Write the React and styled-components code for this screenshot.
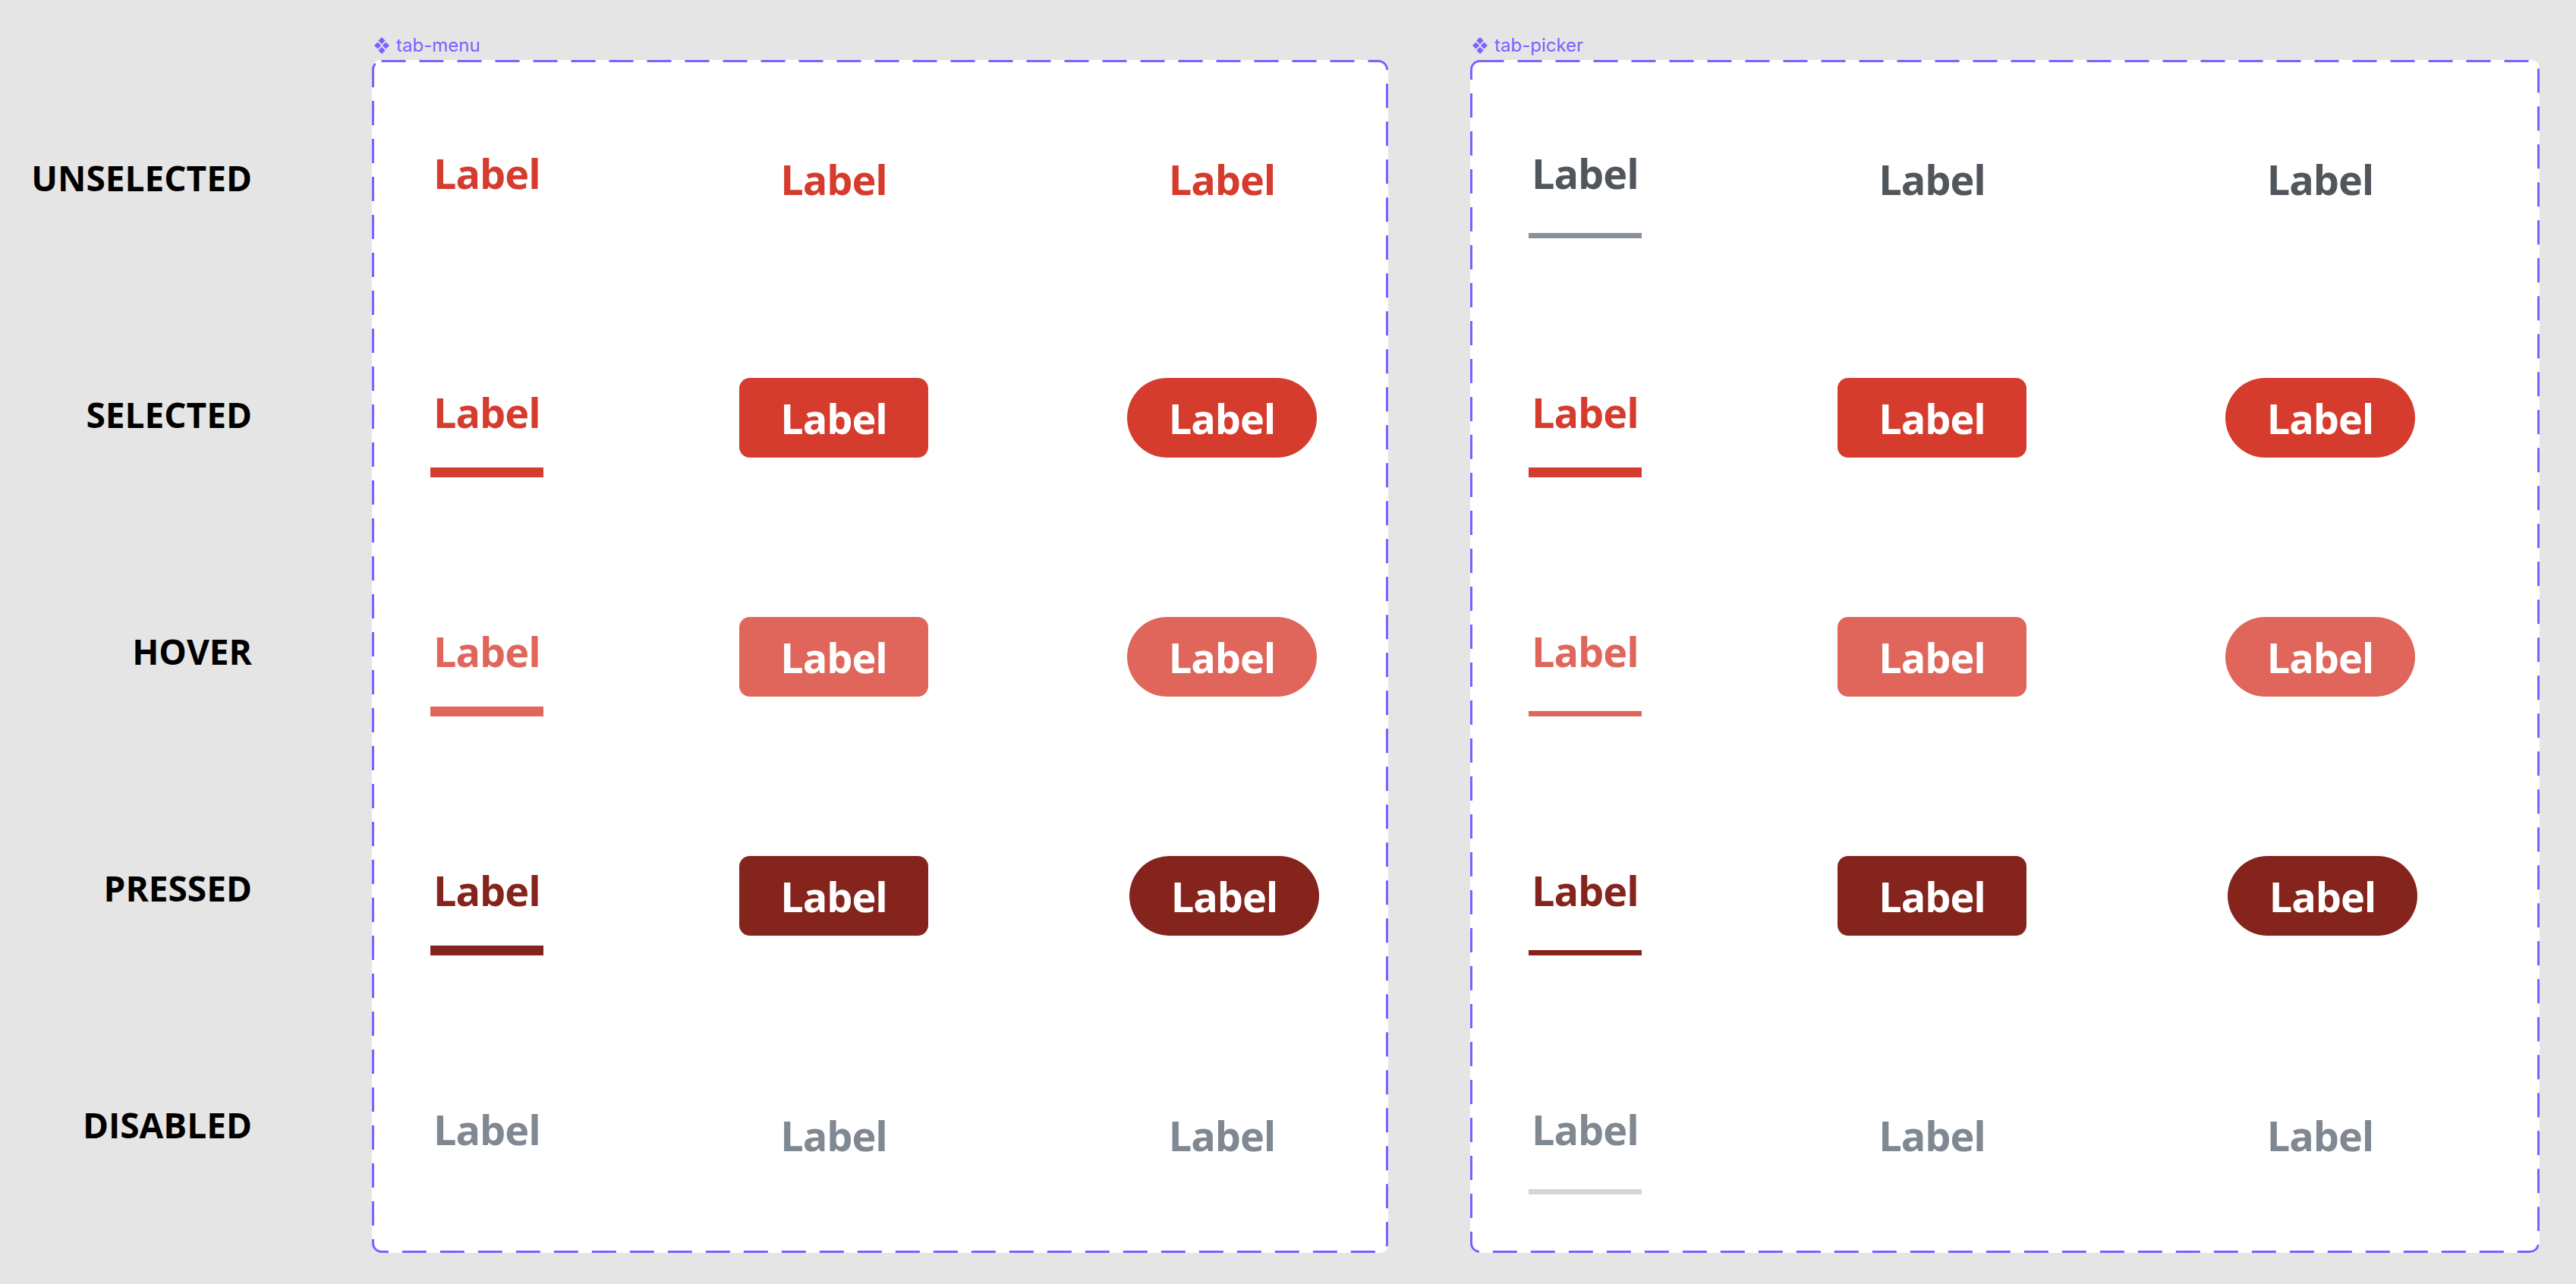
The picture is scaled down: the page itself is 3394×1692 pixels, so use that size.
import React from 'react'
import styled, { createGlobalStyle } from 'styled-components'

const RED = '#D63C2E'
const HOVER = '#E0665B'
const PRESSED = '#85241D'
const IDLE = '#51565D'
const DISABLED = '#808892'
const PURPLE = '#7B61FF'

const STATES = ['UNSELECTED', 'SELECTED', 'HOVER', 'PRESSED', 'DISABLED']

// what each state looks like, per component set
const looks = {
  menu: {
    UNSELECTED: { text: RED, bar: null, barH: 13, fill: null },
    SELECTED: { text: RED, bar: RED, barH: 13, fill: RED },
    HOVER: { text: HOVER, bar: HOVER, barH: 13, fill: HOVER },
    PRESSED: { text: PRESSED, bar: PRESSED, barH: 13, fill: PRESSED },
    DISABLED: { text: DISABLED, bar: null, barH: 13, fill: null },
  },
  picker: {
    UNSELECTED: { text: IDLE, bar: '#8A9199', barH: 7, fill: null },
    SELECTED: { text: RED, bar: RED, barH: 13, fill: RED },
    HOVER: { text: HOVER, bar: HOVER, barH: 7, fill: HOVER },
    PRESSED: { text: PRESSED, bar: PRESSED, barH: 7, fill: PRESSED },
    DISABLED: { text: DISABLED, bar: '#D2D5D9', barH: 7, fill: null },
  },
}

const FRAME_H = 1572

export default function App() {
  return (
    <>
      <GlobalStyle />
      <Page>
        <Legend>
          {STATES.map(s => (
            <StateName key={s}>{s}</StateName>
          ))}
        </Legend>
        <Specimen title="tab-menu" variant="menu" width={1339} offset={158} />
        <Specimen title="tab-picker" variant="picker" width={1409} offset={108} />
      </Page>
    </>
  )
}

function Specimen({ title, variant, width, offset }) {
  return (
    <Block $offset={offset}>
      <Caption>
        <ComponentIcon />
        <span>{title}</span>
      </Caption>
      <Frame $w={width}>
        <Outline width={width} height={FRAME_H}>
          <rect
            x="1.5"
            y="1.5"
            width={width - 3}
            height={FRAME_H - 3}
            rx="11"
            fill="none"
            stroke={PURPLE}
            strokeWidth="3"
            strokeDasharray="32 18"
          />
        </Outline>
        {STATES.map(s => {
          const look = looks[variant][s]
          return (
            <React.Fragment key={s}>
              <UnderlineTab>
                <TabText $color={look.text}>Label</TabText>
                <BarSlot>
                  <Bar $color={look.bar} $h={look.barH} />
                </BarSlot>
              </UnderlineTab>
              <Chip $fill={look.fill} $color={look.fill ? '#fff' : look.text}>
                Label
              </Chip>
              <Chip
                $pill
                $nudge={s === 'PRESSED'}
                $fill={look.fill}
                $color={look.fill ? '#fff' : look.text}
              >
                Label
              </Chip>
            </React.Fragment>
          )
        })}
      </Frame>
    </Block>
  )
}

function ComponentIcon() {
  return (
    <svg width="20" height="24" viewBox="0 0 20 24">
      <g fill={PURPLE}>
        <path d="M10 1 L14.6 5.6 L10 10.2 L5.4 5.6 Z" />
        <path d="M4.6 7.4 L9.2 12 L4.6 16.6 L0 12 Z" />
        <path d="M15.4 7.4 L20 12 L15.4 16.6 L10.8 12 Z" />
        <path d="M10 13.8 L14.6 18.4 L10 23 L5.4 18.4 Z" />
      </g>
    </svg>
  )
}

const GlobalStyle = createGlobalStyle`
  body {
    margin: 0;
    background: #E5E5E5;
    font-family: "Open Sans", "Liberation Sans", sans-serif;
  }
`

const Page = styled.div`
  display: flex;
  align-items: flex-start;
  padding-top: 45px;
  min-height: 100vh;
  box-sizing: border-box;
  background: #E5E5E5;
`

const Legend = styled.div`
  width: 332px;
  padding-top: 136px;
  display: flex;
  flex-direction: column;
  gap: 207px;
`

const StateName = styled.div`
  height: 105px;
  display: flex;
  align-items: center;
  justify-content: flex-end;
  font-family: "Open Sans", sans-serif;
  font-weight: 700;
  font-size: 46px;
  line-height: 1;
  color: #000;
`

const Block = styled.section`
  margin-left: ${p => p.$offset}px;
  display: flex;
  flex-direction: column;
`

const Caption = styled.div`
  height: 29px;
  margin-bottom: 5px;
  padding-left: 3px;
  display: flex;
  align-items: center;
  gap: 9px;
  font-family: Inter, sans-serif;
  font-size: 24px;
  color: ${PURPLE};
`

const Frame = styled.div`
  position: relative;
  width: ${p => p.$w}px;
  height: ${FRAME_H}px;
  box-sizing: border-box;
  background: #fff;
  border-radius: 11px;
  padding: 104px 0 0 77px;
  display: grid;
  grid-template-columns: 145px 249px 250px;
  grid-auto-rows: 105px;
  column-gap: 262px;
  row-gap: 210px;
`

const Outline = styled.svg`
  position: absolute;
  inset: 0;
  pointer-events: none;
`

const UnderlineTab = styled.div`
  align-self: start;
  justify-self: start;
  display: flex;
  flex-direction: column;
`

const TabText = styled.span`
  padding: 18px 4px 0 4px;
  font-weight: 700;
  font-size: 54px;
  line-height: 1;
  letter-spacing: -1px;
  color: ${p => p.$color};
`

const BarSlot = styled.div`
  height: 13px;
  margin-top: 46px;
  display: flex;
  align-items: flex-end;
`

const Bar = styled.div`
  width: 100%;
  height: ${p => p.$h}px;
  background: ${p => p.$color || 'transparent'};
`

const Chip = styled.div`
  height: 105px;
  display: flex;
  align-items: center;
  justify-content: center;
  border-radius: ${p => (p.$pill ? '53px' : '14px')};
  background: ${p => p.$fill || 'transparent'};
  color: ${p => p.$color};
  font-weight: 700;
  font-size: 54px;
  line-height: 1;
  letter-spacing: -1px;
  transform: ${p => (p.$nudge ? 'translateX(3px)' : 'none')};
`
